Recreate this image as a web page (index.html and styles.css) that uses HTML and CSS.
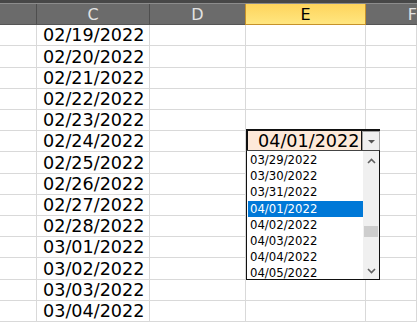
FILE: index.html
```html
<!DOCTYPE html>
<html lang="en">
<head>
  <meta charset="UTF-8">
  <title>Sheet with date dropdown</title>
  <link rel="stylesheet" href="styles.css">
</head>
<body>
  <div class="topline"></div>
  <div class="sheet">
    <div class="hdr"></div>
    <div class="hdr">C</div>
    <div class="hdr">D</div>
    <div class="hdr sel">E</div>
    <div class="hdr last">F</div>

    <div class="cell"></div><div class="cell date">02/19/2022</div><div class="cell"></div><div class="cell"></div><div class="cell"></div>
    <div class="cell"></div><div class="cell date">02/20/2022</div><div class="cell"></div><div class="cell"></div><div class="cell"></div>
    <div class="cell"></div><div class="cell date">02/21/2022</div><div class="cell"></div><div class="cell"></div><div class="cell"></div>
    <div class="cell"></div><div class="cell date">02/22/2022</div><div class="cell"></div><div class="cell"></div><div class="cell"></div>
    <div class="cell"></div><div class="cell date">02/23/2022</div><div class="cell"></div><div class="cell"></div><div class="cell"></div>
    <div class="cell"></div><div class="cell date">02/24/2022</div><div class="cell"></div><div class="cell"></div><div class="cell"></div>
    <div class="cell"></div><div class="cell date">02/25/2022</div><div class="cell"></div><div class="cell"></div><div class="cell"></div>
    <div class="cell"></div><div class="cell date">02/26/2022</div><div class="cell"></div><div class="cell"></div><div class="cell"></div>
    <div class="cell"></div><div class="cell date">02/27/2022</div><div class="cell"></div><div class="cell"></div><div class="cell"></div>
    <div class="cell"></div><div class="cell date">02/28/2022</div><div class="cell"></div><div class="cell"></div><div class="cell"></div>
    <div class="cell"></div><div class="cell date">03/01/2022</div><div class="cell"></div><div class="cell"></div><div class="cell"></div>
    <div class="cell"></div><div class="cell date">03/02/2022</div><div class="cell"></div><div class="cell"></div><div class="cell"></div>
    <div class="cell"></div><div class="cell date">03/03/2022</div><div class="cell"></div><div class="cell"></div><div class="cell"></div>
    <div class="cell"></div><div class="cell date">03/04/2022</div><div class="cell"></div><div class="cell"></div><div class="cell"></div>
  </div>

  <div class="combo">
    <div class="combo-box">
      <div class="combo-value">04/01/2022</div>
      <div class="combo-btn">
        <svg width="9" height="5" viewBox="0 0 9 5"><path d="M1 1h7L4.5 4.5z" fill="#555"/></svg>
      </div>
    </div>
    <div class="list">
      <div class="items">
        <div class="item">03/29/2022</div>
        <div class="item">03/30/2022</div>
        <div class="item">03/31/2022</div>
        <div class="item active">04/01/2022</div>
        <div class="item">04/02/2022</div>
        <div class="item">04/03/2022</div>
        <div class="item">04/04/2022</div>
        <div class="item">04/05/2022</div>
      </div>
      <div class="scroll">
        <svg class="arr" width="9" height="6" viewBox="0 0 9 6"><path d="M1 5L4.5 1.5L8 5" fill="none" stroke="#606060" stroke-width="1.6"/></svg>
        <div class="track"><div class="thumb"></div></div>
        <svg class="arr" width="9" height="6" viewBox="0 0 9 6"><path d="M1 1L4.5 4.5L8 1" fill="none" stroke="#606060" stroke-width="1.6"/></svg>
      </div>
    </div>
  </div>
</body>
</html>
```

FILE: styles.css
```css
body { margin: 0; width: 417px; height: 324px; overflow: hidden; background: #fff; font-family: "DejaVu Sans", Verdana, sans-serif; position: relative; }
.topline { height: 3px; background: #474747; border-bottom: 1px solid #8c8c8c; }
.sheet { display: grid; grid-template-columns: 37px 113px 96px 120px 1fr; grid-template-rows: 21px 21px 22px 21px 21px 21px 21px 22px 21px 21px 21px 21px 22px 21px 21px; }
.hdr { background: #6b6b6b; border-right: 1px solid #4e4e4e; border-bottom: 1px solid #555; color: #e2e2e2; font-size: 16px; display: flex; align-items: center; justify-content: center; }
.hdr.sel { background: linear-gradient(#fed45c, #ffe680); color: #000; border-right: 1px solid #c6922a; border-bottom: 1px solid #c6922a; border-left: 1px solid #c6922a; margin-left: -1px; }
.hdr.last { border-right: none; justify-content: flex-end; padding-right: 0; }
.cell { border-right: 1px solid #d9d9d9; border-bottom: 1px solid #d9d9d9; }
.cell.date { font-size: 17.6px; color: #000; display: flex; align-items: center; padding-left: 6px; }
.combo { position: absolute; left: 246px; top: 129px; width: 134px; }
.combo-box { display: flex; height: 19px; border-top: 2px solid #111; border-left: 2px solid #111; }
.combo-value { flex: 1; background: #fde9d9; font-size: 17.6px; line-height: 20px; padding-left: 10px; border-right: 1px solid #111; }
.combo-btn { width: 16px; background: #f0f0f0; border: 1px solid #a0a0a0; border-bottom: none; display: flex; align-items: center; justify-content: center; }
.list { display: flex; height: 128px; border: 1px solid #111; border-top: 1px solid #444; background: #fff; }
.items { flex: 1; padding: 1px 0 0 1px; }
.item { height: 16.2px; font-size: 11.7px; line-height: 16px; padding-left: 2px; color: #000; }
.item.active { background: #0078d7; color: #fff; }
.scroll { width: 16px; background: #f0f0f0; display: flex; flex-direction: column; align-items: center; padding: 7px 0 5px; }
.track { flex: 1; width: 100%; position: relative; }
.thumb { position: absolute; left: 1px; right: 1px; top: 62px; height: 11px; background: #cdcdcd; }
```
